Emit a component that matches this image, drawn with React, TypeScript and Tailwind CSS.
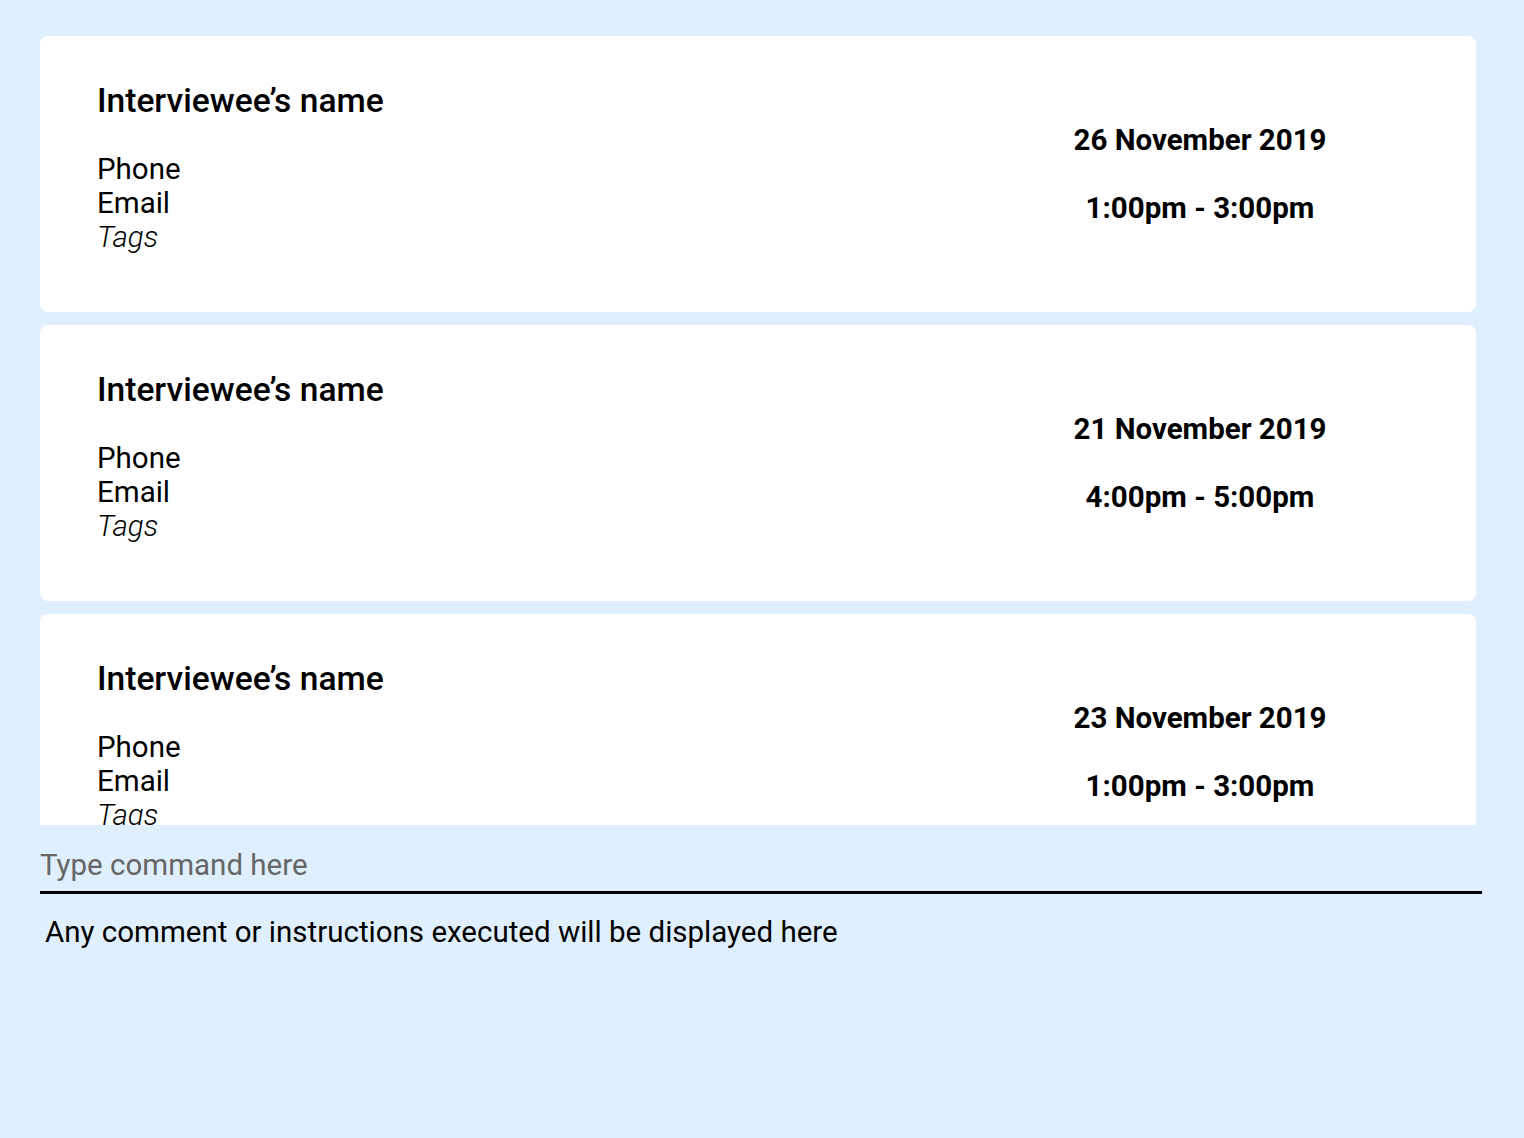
import React from "react";

const items = [
  { date: "26 November 2019", time: "1:00pm - 3:00pm" },
  { date: "21 November 2019", time: "4:00pm - 5:00pm" },
  { date: "23 November 2019", time: "1:00pm - 3:00pm" },
];

function Card({ date, time }: { date: string; time: string }) {
  return (
    <div className="flex h-[276px] w-full shrink-0 items-stretch rounded-[8px] bg-white">
      <div className="flex flex-1 flex-col pl-[57px] pt-[45px]">
        <div className="text-[33.6px] font-medium leading-[40px] text-black">Interviewee’s name</div>
        <div className="mt-[31px] flex flex-col text-[29.5px] leading-[34px] text-black">
          <span>Phone</span>
          <span>Email</span>
          <span className="font-light italic">Tags</span>
        </div>
      </div>
      <div className="mr-[76px] flex w-[400px] flex-col items-center justify-center gap-[30px] text-[29.5px] font-bold leading-[38px] text-black">
        <span>{date}</span>
        <span>{time}</span>
      </div>
    </div>
  );
}

export default function App() {
  return (
    <div
      className="min-h-[1138px] w-full bg-[#dfeffd] pt-[36px]"
      style={{ fontFamily: "Roboto, 'Noto Sans', sans-serif" }}
    >
      <div className="ml-[40px] flex h-[789px] w-[1436px] flex-col gap-[13px] overflow-hidden">
        {items.map((it, i) => (
          <Card key={i} date={it.date} time={it.time} />
        ))}
      </div>
      <div className="ml-[40px] mt-[23px] w-[1442px] border-b-[3px] border-black pb-[9px]">
        <input
          className="block w-full bg-transparent text-[29.5px] leading-[34px] text-black outline-none placeholder:text-[#666666]"
          placeholder="Type command here"
        />
      </div>
      <div className="ml-[45px] mt-[21px] text-[29.5px] leading-[34px] text-black">
        Any comment or instructions executed will be displayed here
      </div>
    </div>
  );
}
